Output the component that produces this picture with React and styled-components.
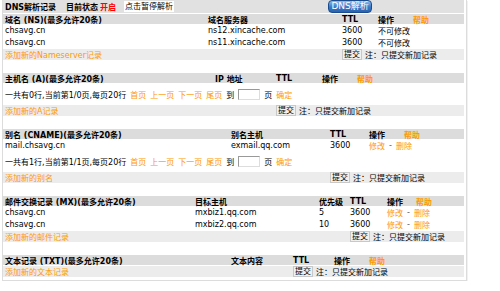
import React from 'react';
import styled, { createGlobalStyle } from 'styled-components';

const GlobalStyle = createGlobalStyle`
  body {
    margin: 0;
    background: #fff;
    color: #000;
    font-family: "DejaVu Sans", "Noto Sans CJK SC", sans-serif;
    font-size: 8px;
  }
`;

const Panel = styled.div`
  width: 461px;
  margin-left: 2px;
  padding: 0 2px 3px 0;
  border: 1px solid #dcdcdc;
  border-top: none;
  box-shadow: 1px 1px 0 #f1f1f1;
`;

const TitleBar = styled.div`
  display: flex;
  align-items: center;
  height: 13px;
  padding-left: 2px;
  margin-bottom: 1px;
  background: #e1e1e1;
`;

const Strong = styled.span`
  font-weight: bold;
  margin-left: ${(p) => p.$gap || 0}px;
  color: ${(p) => p.$color || '#000'};
`;

const PauseLink = styled.span`
  margin-left: 8px;
  padding: 0 1px;
  height: 11px;
  line-height: 11px;
  background: #fff;
`;

const DnsButton = styled.button`
  margin-left: 154px;
  width: 44px;
  height: 13px;
  padding: 0;
  border: 1px solid #1b4d8e;
  border-radius: 4px;
  background: linear-gradient(#8dbbee, #3a78c6 55%, #2a63b0);
  color: #fff;
  font-family: inherit;
  font-size: 9px;
  line-height: 11px;
`;

const Table = styled.div`
  display: flex;
  flex-direction: column;
  gap: 1px;
  & + & {
    margin-top: 13px;
  }
`;

const Row = styled.div`
  display: grid;
  grid-template-columns: ${(p) => p.$cols};
  align-items: center;
  height: ${(p) => p.$h || 11}px;
  background: ${(p) => p.$bg || 'transparent'};
  font-weight: ${(p) => (p.$bold ? 'bold' : 'normal')};
`;

const Cell = styled.div`
  display: flex;
  align-items: center;
  padding-left: 2px;
  white-space: nowrap;
`;

const OpLabel = styled.span`
  display: inline-block;
  width: ${(p) => p.$w}px;
`;

const Link = styled.span`
  color: #ff9900;
  font-weight: ${(p) => (p.$bold ? 'bold' : 'normal')};
`;

const Dash = styled.span`
  margin: 0 4px;
  color: #555;
`;

const Pager = styled.div`
  display: flex;
  align-items: center;
  gap: 4px;
  height: ${(p) => p.$h}px;
  padding-left: 2px;
  white-space: nowrap;
`;

const PageInput = styled.input`
  width: 20px;
  height: 9px;
  margin: 0;
  padding: 0;
  border: 1px solid #999;
  border-right-color: #ddd;
  border-bottom-color: #ddd;
`;

const SubmitButton = styled.button`
  height: 11px;
  padding: 0 1px;
  margin-right: 3px;
  border: 1px solid #c8c8c8;
  background: #f0f0f0;
  font-family: inherit;
  font-size: 8px;
  line-height: 9px;
  color: #000;
`;

const HEAD = '#dcdcdc';
const ADD = '#ececec';

function Head({ cols, labels, opGap }) {
  return (
    <Row $cols={cols} $bg={HEAD} $h={10} $bold>
      {labels.map((l) => (
        <Cell key={l}>{l}</Cell>
      ))}
      <Cell>
        <OpLabel $w={opGap}>操作</OpLabel>
        <Link $bold>帮助</Link>
      </Cell>
    </Row>
  );
}

function AddRow({ ttlAt, label }) {
  return (
    <Row $cols={`${ttlAt}px 1fr`} $bg={ADD}>
      <Cell>
        <Link>{label}</Link>
      </Cell>
      <Cell>
        <SubmitButton>提交</SubmitButton>注：只提交新加记录
      </Cell>
    </Row>
  );
}

function EditOps() {
  return (
    <Cell>
      <Link>修改</Link>
      <Dash>-</Dash>
      <Link>删除</Link>
    </Cell>
  );
}

function Paging({ total, page, h }) {
  return (
    <Pager $h={h}>
      <span>一共有{total}行,当前第{page}页,每页20行</span>
      <Link>首页</Link>
      <Link>上一页</Link>
      <Link>下一页</Link>
      <Link>尾页</Link>
      <span>到</span>
      <PageInput />
      <span>页</span>
      <Link>确定</Link>
    </Pager>
  );
}

const NS_COLS = '203px 134px 36px 1fr';
const A_COLS = '210px 61px 46px 1fr';
const CN_COLS = '226px 99px 39px 1fr';
const MX_COLS = '190px 124px 31px 37px 1fr';
const TXT_COLS = '226px 62px 41px 1fr';

const nsRows = [
  ['chsavg.cn', 'ns12.xincache.com'],
  ['chsavg.cn', 'ns11.xincache.com'],
];

const mxRows = [
  ['chsavg.cn', 'mxbiz1.qq.com', '5'],
  ['chsavg.cn', 'mxbiz2.qq.com', '10'],
];

export default function App() {
  return (
    <>
      <GlobalStyle />
      <Panel>
        <TitleBar>
          <Strong>DNS解析记录</Strong>
          <Strong $gap={10}>目前状态</Strong>
          <Strong $gap={2} $color="#ff0000">开启</Strong>
          <PauseLink>点击暂停解析</PauseLink>
          <DnsButton>DNS解析</DnsButton>
        </TitleBar>

        <Table>
          <Head cols={NS_COLS} labels={['域名 (NS)(最多允许20条)', '域名服务器', 'TTL']} opGap={35} />
          {nsRows.map(([d, s]) => (
            <Row key={s} $cols={NS_COLS}>
              <Cell>{d}</Cell>
              <Cell>{s}</Cell>
              <Cell>3600</Cell>
              <Cell>不可修改</Cell>
            </Row>
          ))}
          <AddRow ttlAt={337} label="添加新的Nameserver记录" />
        </Table>

        <Table>
          <Head cols={A_COLS} labels={['主机名 (A)(最多允许20条)', 'IP 地址', 'TTL']} opGap={35} />
          <Paging total={0} page="1/0" h={20} />
          <AddRow ttlAt={271} label="添加新的A记录" />
        </Table>

        <Table>
          <Head cols={CN_COLS} labels={['别名 (CNAME)(最多允许20条)', '别名主机', 'TTL']} opGap={35} />
          <Row $cols={CN_COLS}>
            <Cell>mail.chsavg.cn</Cell>
            <Cell>exmail.qq.com</Cell>
            <Cell>3600</Cell>
            <EditOps />
          </Row>
          <Paging total={1} page="1/1" h={19} />
          <AddRow ttlAt={325} label="添加新的别名" />
        </Table>

        <Table>
          <Head cols={MX_COLS} labels={['邮件交换记录 (MX)(最多允许20条)', '目标主机', '优先级', 'TTL']} opGap={29} />
          {mxRows.map(([d, h, p]) => (
            <Row key={h} $cols={MX_COLS}>
              <Cell>{d}</Cell>
              <Cell>{h}</Cell>
              <Cell>{p}</Cell>
              <Cell>3600</Cell>
              <EditOps />
            </Row>
          ))}
          <AddRow ttlAt={345} label="添加新的邮件记录" />
        </Table>

        <Table>
          <Head cols={TXT_COLS} labels={['文本记录 (TXT)(最多允许20条)', '文本内容', 'TTL']} opGap={35} />
          <AddRow ttlAt={288} label="添加新的文本记录" />
        </Table>
      </Panel>
    </>
  );
}
